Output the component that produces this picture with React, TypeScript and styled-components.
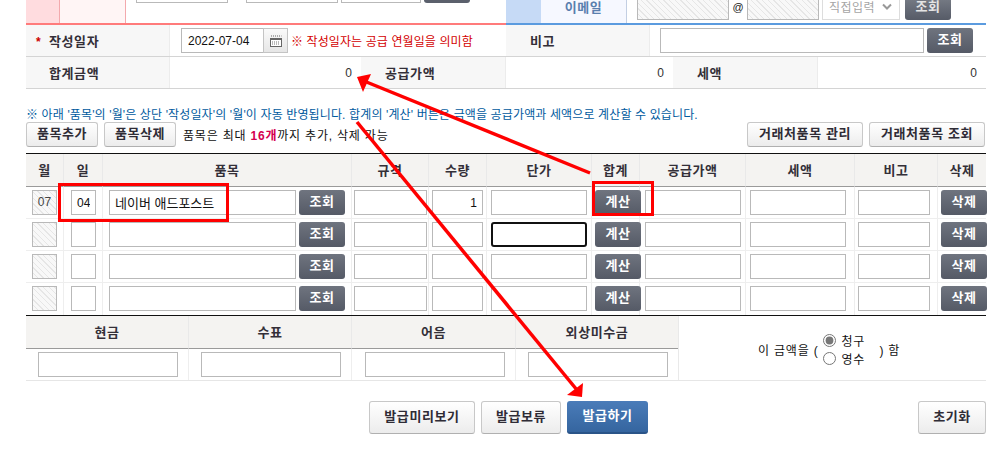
import React from 'react';
import styled, { createGlobalStyle, css } from 'styled-components';

const GlobalStyle = createGlobalStyle`
  html, body {
    margin: 0;
    background: #fff;
    font-family: "Liberation Sans", "Noto Sans CJK KR", sans-serif;
    font-size: 12px;
    color: #222;
  }
`;

const hatch = css`
  background: repeating-linear-gradient(45deg, #f8f8f8 0 3px, #e6e6e6 3px 4px);
`;

const label = css`
  font-weight: bold;
  font-size: 13px;
  letter-spacing: 0.6px;
`;

const ITEM_COLUMNS = '38px 39px 249px 77px 58px 105px 48px 106px 109px 83px 48px';
const PAYMENT_COLUMNS = '163px 163px 164px 163px 307px';

const emptyRows = [0, 1, 2];

export default function App() {
  return (
    <Page>
      <GlobalStyle />
      <TopStrip>
        <TopSide $line="#ff7b7b">
          <TopTag $bg="#ffdcdf" $edge="#f3a9ad" $width={34} />
          <TopTag $bg="#fff5f5" $edge="#f3a9ad" $width={66} />
          <ClippedInput $width={92} $left={10} />
          <ClippedInput $width={92} $left={18} />
          <ClippedInput $width={80} $left={3} />
          <ClippedButton />
        </TopSide>
        <TopSide $line="#5b9bdf">
          <TopTag $bg="#c6daf6" $edge="#c6daf6" $width={35} />
          <TopTag $bg="#f6f8ff" $edge="#c3cfe3" $width={86}>
            <EmailLabel>이메일</EmailLabel>
          </TopTag>
          <MailBox $width={92} $left={10} />
          <AtSign>@</AtSign>
          <MailBox $width={72} $left={0} />
          <DomainSelect>
            직접입력
            <svg width="10" height="7" viewBox="0 0 10 7">
              <path d="M1 1.5 L5 5.5 L9 1.5" fill="none" stroke="#999" strokeWidth="2" />
            </svg>
          </DomainSelect>
          <MailButton>조회</MailButton>
        </TopSide>
      </TopStrip>

      <InfoRow $columns="144px 336px 144px 336px">
        <InfoHead $left={23}>
          <Star>*</Star>작성일자
        </InfoHead>
        <InfoCell>
          <DateInput readOnly value="2022-07-04" />
          <CalendarButton>
            <svg width="12" height="12" viewBox="0 0 12 12">
              <path d="M1 1h1M3 1h1M5 1h1M7 1h1M9 1h1M11 1h.5" stroke="#666" fill="none" />
              <rect x="0.5" y="3.5" width="11" height="8" fill="#fff" stroke="#666" />
              <rect x="1" y="3" width="10" height="2" fill="#666" />
              <path d="M2 7h8M2 9h8" stroke="#777" strokeDasharray="1 1" fill="none" />
            </svg>
          </CalendarButton>
          <DateNote>※ 작성일자는 공급 연월일을 의미함</DateNote>
        </InfoCell>
        <InfoHead $left={24}>비고</InfoHead>
        <InfoCell $left={10}>
          <Field $width={264} />
          <DarkButton $width={46}>조회</DarkButton>
        </InfoCell>
      </InfoRow>
      <InfoRow $columns="144px 191px 145px 167px 145px 168px">
        <InfoHead $left={23}>합계금액</InfoHead>
        <AmountCell>0</AmountCell>
        <InfoHead $left={24}>공급가액</InfoHead>
        <AmountCell>0</AmountCell>
        <InfoHead $left={24}>세액</InfoHead>
        <AmountCell>0</AmountCell>
      </InfoRow>

      <Notice>※ 아래 '품목'의 '월'은 상단 '작성일자'의 '월'이 자동 반영됩니다. 합계의 '계산' 버튼은 금액을 공급가액과 세액으로 계산할 수 있습니다.</Notice>

      <Toolbar>
        <LightButton $width={72}>품목추가</LightButton>
        <LightButton $width={72}>품목삭제</LightButton>
        <LimitText>
          품목은 최대 <LimitCount>16개</LimitCount>까지 추가, 삭제 가능
        </LimitText>
        <ToolbarEnd>
          <LightButton $width={116}>거래처품목 관리</LightButton>
          <LightButton $width={116}>거래처품목 조회</LightButton>
        </ToolbarEnd>
      </Toolbar>

      <ItemTable>
        <HeadRow $columns={ITEM_COLUMNS}>
          {['월', '일', '품목', '규격', '수량', '단가', '합계', '공급가액', '세액', '비고', '삭제'].map(name => (
            <HeadCell key={name}>{name}</HeadCell>
          ))}
        </HeadRow>
        <ItemRow month="07" day="04" name="네이버 애드포스트" quantity="1" />
        {emptyRows.map(row => (
          <ItemRow key={row} focused={row === 0} />
        ))}
      </ItemTable>

      <PaymentTable>
        <HeadRow $columns={PAYMENT_COLUMNS}>
          <HeadCell>현금</HeadCell>
          <HeadCell>수표</HeadCell>
          <HeadCell>어음</HeadCell>
          <HeadCell>외상미수금</HeadCell>
          <ClaimCell>
            이 금액을 (
            <RadioStack>
              <RadioLabel>
                <Radio type="radio" name="claim" defaultChecked />
                청구
              </RadioLabel>
              <RadioLabel>
                <Radio type="radio" name="claim" />
                영수
              </RadioLabel>
            </RadioStack>
            ) 함
          </ClaimCell>
        </HeadRow>
        <PaymentRow $columns={PAYMENT_COLUMNS}>
          <BodyCell $left={12}><Field $width={140} /></BodyCell>
          <BodyCell $left={12}><Field $width={140} /></BodyCell>
          <BodyCell $left={13}><Field $width={140} /></BodyCell>
          <BodyCell $left={12}><Field $width={140} /></BodyCell>
        </PaymentRow>
      </PaymentTable>

      <Actions>
        <LightButton $width={106} $tall>발급미리보기</LightButton>
        <LightButton $width={80} $tall>발급보류</LightButton>
        <PrimaryButton>발급하기</PrimaryButton>
        <ResetSlot>
          <LightButton $width={68} $tall>초기화</LightButton>
        </ResetSlot>
      </Actions>

      <Annotations viewBox="0 0 999 451" width="999" height="451">
        <rect x="59.5" y="184.5" width="168" height="36" fill="none" stroke="#f00" strokeWidth="3" />
        <rect x="593.5" y="182.5" width="59" height="32" fill="none" stroke="#f00" strokeWidth="3" />
        <path d="M590 173 L364 81" stroke="#f00" strokeWidth="3.5" fill="none" />
        <polygon points="357,77 371,74 363,92" fill="#f00" />
        <path d="M357 122 L577 390" stroke="#f00" strokeWidth="3.5" fill="none" />
        <polygon points="582,397 583,383 567,395" fill="#f00" />
      </Annotations>
    </Page>
  );
}

type ItemRowProps = {
  month?: string;
  day?: string;
  name?: string;
  quantity?: string;
  focused?: boolean;
};

function ItemRow({ month, day, name, quantity, focused }: ItemRowProps) {
  return (
    <BodyRow $columns={ITEM_COLUMNS}>
      <BodyCell $left={6}>
        <MonthBox>{month}</MonthBox>
      </BodyCell>
      <BodyCell $left={7}>
        <Field $width={25} $center readOnly value={day ?? ''} />
      </BodyCell>
      <BodyCell $left={6}>
        <Field $width={187} $text readOnly value={name ?? ''} />
        <DarkButton $width={46}>조회</DarkButton>
      </BodyCell>
      <BodyCell $left={2}><Field $width={73} /></BodyCell>
      <BodyCell $left={3}><Field $width={51} $right readOnly value={quantity ?? ''} /></BodyCell>
      <BodyCell $left={4}><Field $width={96} $focused={focused} /></BodyCell>
      <BodyCell $left={3}><DarkButton $width={46}>계산</DarkButton></BodyCell>
      <BodyCell $left={5}><Field $width={96} /></BodyCell>
      <BodyCell $left={4}><Field $width={96} /></BodyCell>
      <BodyCell $left={3}><Field $width={72} /></BodyCell>
      <BodyCell $left={3}><DarkButton $width={46}>삭제</DarkButton></BodyCell>
    </BodyRow>
  );
}

const Page = styled.div`
  position: relative;
  box-sizing: border-box;
  width: 999px;
  height: 451px;
  padding-left: 26px;
  overflow: hidden;
`;

const TopStrip = styled.div`
  display: flex;
  width: 960px;
  height: 25px;
`;

const TopSide = styled.div<{ $line: string }>`
  display: flex;
  box-sizing: border-box;
  width: 480px;
  height: 25px;
  overflow: hidden;
  border-bottom: 2px solid ${props => props.$line};
`;

const TopTag = styled.div<{ $bg: string; $edge: string; $width: number }>`
  box-sizing: border-box;
  flex: none;
  width: ${props => props.$width}px;
  background: ${props => props.$bg};
  border-right: 1px solid ${props => props.$edge};
  text-align: center;
`;

const EmailLabel = styled.span`
  ${label};
  color: #5a7fae;
  line-height: 15px;
  display: block;
`;

const ClippedInput = styled.div<{ $width: number; $left: number }>`
  box-sizing: border-box;
  flex: none;
  width: ${props => props.$width}px;
  height: 3px;
  margin-left: ${props => props.$left}px;
  border: 1px solid #b9b9b9;
  border-top: 0;
  background: #fff;
`;

const ClippedButton = styled.div`
  flex: none;
  width: 46px;
  height: 3px;
  margin-left: 3px;
  background: #5b606c;
  border-radius: 0 0 3px 3px;
`;

const MailBox = styled.div<{ $width: number; $left: number }>`
  ${hatch};
  box-sizing: border-box;
  flex: none;
  width: ${props => props.$width}px;
  height: 20px;
  margin-left: ${props => props.$left}px;
  border: 1px solid #b9b9b9;
  border-top: 0;
`;

const AtSign = styled.span`
  flex: none;
  width: 18px;
  text-align: center;
  font-size: 11px;
  line-height: 14px;
`;

const DomainSelect = styled.div`
  box-sizing: border-box;
  display: flex;
  align-items: center;
  justify-content: space-between;
  flex: none;
  width: 78px;
  height: 20px;
  margin-left: 3px;
  padding: 0 7px 6px 6px;
  border: 1px solid #ddd;
  border-top: 0;
  color: #a5a5a5;
  font-size: 12px;
  letter-spacing: 0.5px;
`;

const MailButton = styled.div`
  ${label};
  flex: none;
  width: 46px;
  height: 20px;
  margin-left: 5px;
  border-radius: 0 0 3px 3px;
  background: linear-gradient(#737882, #565b67);
  color: #e4e4e4;
  line-height: 14px;
  text-align: center;
`;

const InfoRow = styled.div<{ $columns: string }>`
  display: grid;
  grid-template-columns: ${props => props.$columns};
  box-sizing: border-box;
  width: 960px;
  height: 32px;
  border-bottom: 1px solid #d4d4d4;
`;

const InfoHead = styled.div<{ $left: number }>`
  ${label};
  position: relative;
  display: flex;
  align-items: center;
  padding-left: ${props => props.$left}px;
  background: #f7f7f7;
  border-right: 1px solid #ececec;
  color: #332f38;
`;

const Star = styled.span`
  position: absolute;
  left: 10px;
  top: 10px;
  color: #c00;
  font-size: 12px;
`;

const InfoCell = styled.div<{ $left?: number }>`
  display: flex;
  align-items: center;
  gap: 3px;
  padding-left: ${props => props.$left ?? 11}px;
`;

const AmountCell = styled.div`
  display: flex;
  align-items: center;
  justify-content: flex-end;
  padding-right: 9px;
  font-size: 12px;
  color: #333;
`;

const DateInput = styled.input`
  box-sizing: border-box;
  width: 82px;
  height: 25px;
  margin-right: -3px;
  padding: 0 0 0 6px;
  border: 1px solid #b9b9b9;
  border-right: 0;
  outline: 0;
  font: 12px "Liberation Sans", sans-serif;
  color: #111;
`;

const CalendarButton = styled.div`
  box-sizing: border-box;
  display: flex;
  align-items: center;
  justify-content: center;
  width: 25px;
  height: 25px;
  border: 1px solid #c4c4c4;
  background: linear-gradient(#fafafa, #e6e6e6);
`;

const DateNote = styled.span`
  color: #d40000;
  font-size: 12px;
  letter-spacing: 0.1px;
`;

const Field = styled.input<{ $width: number; $right?: boolean; $center?: boolean; $text?: boolean; $focused?: boolean }>`
  box-sizing: border-box;
  flex: none;
  width: ${props => props.$width}px;
  height: 25px;
  margin: 0;
  padding: 0 5px;
  border: 1px solid #b9b9b9;
  background: #fff;
  outline: 0;
  font-family: "Liberation Sans", "Noto Sans CJK KR", sans-serif;
  font-size: ${props => (props.$text ? 13 : 12)}px;
  color: #111;
  text-align: ${props => (props.$right ? 'right' : props.$center ? 'center' : 'left')};
  ${props => props.$focused && 'border: 2px solid #111; border-radius: 3px;'}
`;

const MonthBox = styled.div`
  ${hatch};
  box-sizing: border-box;
  width: 25px;
  height: 25px;
  border: 1px solid #b9b9b9;
  text-align: center;
  line-height: 23px;
  font-size: 12px;
  color: #444;
`;

const DarkButton = styled.div<{ $width: number }>`
  ${label};
  flex: none;
  width: ${props => props.$width}px;
  height: 25px;
  border-radius: 3px;
  background: linear-gradient(#6f747f, #555a66);
  color: #fff;
  line-height: 23px;
  text-align: center;
`;

const LightButton = styled.div<{ $width: number; $tall?: boolean }>`
  ${label};
  box-sizing: border-box;
  flex: none;
  width: ${props => props.$width}px;
  height: ${props => (props.$tall ? 33 : 25)}px;
  border: 1px solid #c8c8c8;
  border-bottom-color: #b0b0b0;
  border-radius: 3px;
  background: linear-gradient(#fff, #ececec);
  color: #2f2c36;
  line-height: ${props => (props.$tall ? 30 : 22)}px;
  text-align: center;
`;

const PrimaryButton = styled.div`
  ${label};
  box-sizing: border-box;
  flex: none;
  width: 81px;
  height: 33px;
  border-radius: 3px;
  border-bottom: 2px solid #2a5488;
  background: linear-gradient(#4a7cb9, #35659f);
  color: #fff;
  line-height: 30px;
  text-align: center;
`;

const Notice = styled.div`
  margin-top: 19px;
  height: 14px;
  line-height: 14px;
  white-space: nowrap;
  font-size: 12px;
  letter-spacing: 0.13px;
  color: #005a9e;
`;

const Toolbar = styled.div`
  display: flex;
  align-items: center;
  gap: 6px;
  width: 960px;
`;

const LimitText = styled.span`
  margin-left: 1px;
  font-size: 12px;
  letter-spacing: 0.8px;
  color: #111;
`;

const LimitCount = styled.b`
  color: #d5004f;
`;

const ToolbarEnd = styled.div`
  display: flex;
  gap: 6px;
  margin-left: auto;
  margin-right: 1px;
`;

const ItemTable = styled.div`
  width: 960px;
  margin-top: 6px;
  border-top: 1px solid #111;
  border-bottom: 1px solid #111;
`;

const HeadRow = styled.div<{ $columns: string }>`
  display: grid;
  grid-template-columns: ${props => props.$columns};
  box-sizing: border-box;
  height: 33px;
`;

const HeadCell = styled.div`
  ${label};
  display: flex;
  align-items: center;
  justify-content: center;
  padding-bottom: 1px;
  background: #f4f3f1;
  border-right: 1px solid #e9e9e9;
  border-bottom: 1px solid #9a9a9a;
  color: #332f38;

  &:last-child {
    border-right: 0;
  }
`;

const BodyRow = styled.div<{ $columns: string }>`
  display: grid;
  grid-template-columns: ${props => props.$columns};
  box-sizing: border-box;
  height: 32px;
  border-bottom: 1px solid #eee;

  &:last-child {
    border-bottom: 0;
  }
`;

const PaymentRow = styled(BodyRow)`
  &:last-child {
    border-bottom: 1px solid #e6e6e6;
  }
`;

const BodyCell = styled.div<{ $left: number }>`
  display: flex;
  align-items: flex-start;
  gap: 3px;
  padding-top: 3px;
  padding-left: ${props => props.$left}px;
  border-right: 1px solid #eee;

  &:last-child {
    border-right: 0;
  }
`;

const PaymentTable = styled.div`
  position: relative;
  width: 960px;
`;

const ClaimCell = styled.div`
  position: absolute;
  top: 0;
  right: 0;
  display: flex;
  align-items: center;
  box-sizing: border-box;
  width: 308px;
  height: 64px;
  padding: 3px 0 0 79px;
  border-left: 1px solid #e9e9e9;
  font-size: 12px;
  letter-spacing: 0.8px;
  color: #111;
`;

const RadioStack = styled.div`
  display: flex;
  flex-direction: column;
  gap: 5px;
  width: 56px;
  margin-left: 5px;
`;

const RadioLabel = styled.label`
  display: flex;
  align-items: center;
  gap: 5px;
  height: 13px;
`;

const Radio = styled.input`
  width: 13px;
  height: 13px;
  margin: 0;
  accent-color: #777;
`;

const Actions = styled.div`
  display: flex;
  gap: 6px;
  box-sizing: border-box;
  width: 960px;
  margin-top: 20px;
  padding-left: 343px;
`;

const ResetSlot = styled.div`
  margin-left: auto;
`;

const Annotations = styled.svg`
  position: absolute;
  top: 0;
  left: 0;
  pointer-events: none;
`;
